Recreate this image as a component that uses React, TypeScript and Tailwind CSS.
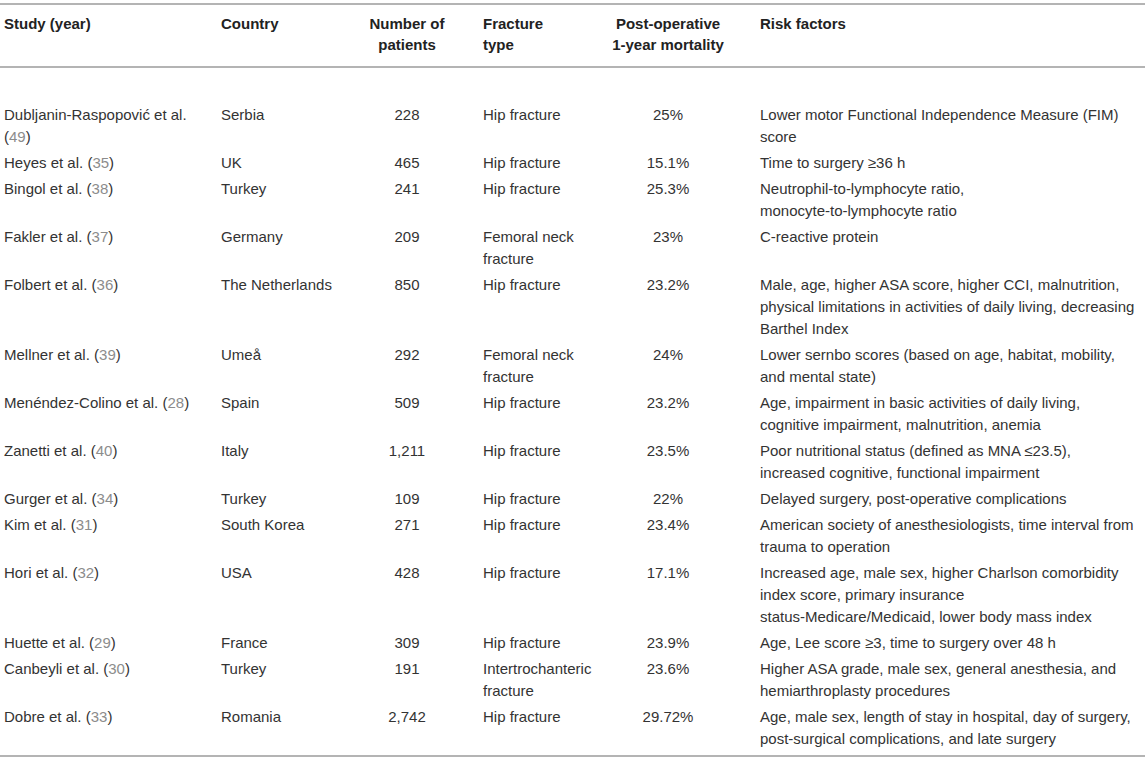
import React from 'react'

type Row = {
    study: string[]
    ref: string
    country: string
    patients: string
    fracture: string[]
    mortality: string
    risk: string[]
}

const rows: Row[] = [
    { study: ['Dubljanin-Raspopović et al.', ''], ref: '49', country: 'Serbia', patients: '228', fracture: ['Hip fracture'], mortality: '25%', risk: ['Lower motor Functional Independence Measure (FIM)', 'score'] },
    { study: ['Heyes et al.'], ref: '35', country: 'UK', patients: '465', fracture: ['Hip fracture'], mortality: '15.1%', risk: ['Time to surgery ≥36 h'] },
    { study: ['Bingol et al.'], ref: '38', country: 'Turkey', patients: '241', fracture: ['Hip fracture'], mortality: '25.3%', risk: ['Neutrophil-to-lymphocyte ratio,', 'monocyte-to-lymphocyte ratio'] },
    { study: ['Fakler et al.'], ref: '37', country: 'Germany', patients: '209', fracture: ['Femoral neck', 'fracture'], mortality: '23%', risk: ['C-reactive protein'] },
    { study: ['Folbert et al.'], ref: '36', country: 'The Netherlands', patients: '850', fracture: ['Hip fracture'], mortality: '23.2%', risk: ['Male, age, higher ASA score, higher CCI, malnutrition,', 'physical limitations in activities of daily living, decreasing', 'Barthel Index'] },
    { study: ['Mellner et al.'], ref: '39', country: 'Umeå', patients: '292', fracture: ['Femoral neck', 'fracture'], mortality: '24%', risk: ['Lower sernbo scores (based on age, habitat, mobility,', 'and mental state)'] },
    { study: ['Menéndez-Colino et al.'], ref: '28', country: 'Spain', patients: '509', fracture: ['Hip fracture'], mortality: '23.2%', risk: ['Age, impairment in basic activities of daily living,', 'cognitive impairment, malnutrition, anemia'] },
    { study: ['Zanetti et al.'], ref: '40', country: 'Italy', patients: '1,211', fracture: ['Hip fracture'], mortality: '23.5%', risk: ['Poor nutritional status (defined as MNA ≤23.5),', 'increased cognitive, functional impairment'] },
    { study: ['Gurger et al.'], ref: '34', country: 'Turkey', patients: '109', fracture: ['Hip fracture'], mortality: '22%', risk: ['Delayed surgery, post-operative complications'] },
    { study: ['Kim et al.'], ref: '31', country: 'South Korea', patients: '271', fracture: ['Hip fracture'], mortality: '23.4%', risk: ['American society of anesthesiologists, time interval from', 'trauma to operation'] },
    { study: ['Hori et al.'], ref: '32', country: 'USA', patients: '428', fracture: ['Hip fracture'], mortality: '17.1%', risk: ['Increased age, male sex, higher Charlson comorbidity', 'index score, primary insurance', 'status-Medicare/Medicaid, lower body mass index'] },
    { study: ['Huette et al.'], ref: '29', country: 'France', patients: '309', fracture: ['Hip fracture'], mortality: '23.9%', risk: ['Age, Lee score ≥3, time to surgery over 48 h'] },
    { study: ['Canbeyli et al.'], ref: '30', country: 'Turkey', patients: '191', fracture: ['Intertrochanteric', 'fracture'], mortality: '23.6%', risk: ['Higher ASA grade, male sex, general anesthesia, and', 'hemiarthroplasty procedures'] },
    { study: ['Dobre et al.'], ref: '33', country: 'Romania', patients: '2,742', fracture: ['Hip fracture'], mortality: '29.72%', risk: ['Age, male sex, length of stay in hospital, day of surgery,', 'post-surgical complications, and late surgery'] },
]

function Lines({ lines }: { lines: string[] }) {
    return (
        <>
            {lines.map((l, i) => (
                <div key={i}>{l}</div>
            ))}
        </>
    )
}

function Study({ row }: { row: Row }) {
    const ref = <>(<span className="text-[#8c8c8c]">{row.ref}</span>)</>
    if (row.study.length > 1) {
        return (
            <>
                <div>{row.study[0]}</div>
                <div>{ref}</div>
            </>
        )
    }
    return <div>{row.study[0]} {ref}</div>
}

export default function App() {
    return (
        <div className="w-[1145px] h-[762px] bg-white pt-[3px] font-['Liberation_Sans',Arial,sans-serif] text-[15px] text-[#333]">
            <table className="w-full table-fixed border-collapse border-t-2 border-b-2 border-[#b4b4b4] whitespace-nowrap">
                <colgroup>
                    <col className="w-[217px]" />
                    <col className="w-[118px]" />
                    <col className="w-[144px]" />
                    <col className="w-[121px]" />
                    <col className="w-[156px]" />
                    <col />
                </colgroup>
                <thead>
                    <tr className="border-b-2 border-[#b4b4b4] align-top text-[#222] leading-[21px]">
                        <th className="pl-[4px] pt-[8px] pb-[11px] text-left font-bold">Study (year)</th>
                        <th className="pl-[4px] pt-[8px] pb-[11px] text-left font-bold">Country</th>
                        <th className="px-[4px] pt-[8px] pb-[11px] text-center font-bold">Number of<br />patients</th>
                        <th className="pl-[4px] pt-[8px] pb-[11px] text-left font-bold">Fracture<br />type</th>
                        <th className="pl-[4px] pr-[24px] pt-[8px] pb-[11px] text-center font-bold">Post-operative<br />1-year mortality</th>
                        <th className="pl-[4px] pr-[4px] pt-[8px] pb-[11px] text-left font-bold">Risk factors</th>
                    </tr>
                </thead>
                <tbody className="leading-[22px]">
                    <tr>
                        <td colSpan={6} className="h-[35px] p-0" />
                    </tr>
                    {rows.map((r) => (
                        <tr key={r.study[0]} className="align-top">
                            <td className="pl-[4px] pr-[4px] py-[2px]">
                                <Study row={r} />
                            </td>
                            <td className="pl-[4px] py-[2px]">{r.country}</td>
                            <td className="px-[4px] py-[2px] text-center">{r.patients}</td>
                            <td className="pl-[4px] py-[2px]">
                                <Lines lines={r.fracture} />
                            </td>
                            <td className="pl-[4px] pr-[24px] py-[2px] text-center">{r.mortality}</td>
                            <td className="pl-[4px] pr-[4px] py-[2px]">
                                <Lines lines={r.risk} />
                            </td>
                        </tr>
                    ))}
                    <tr>
                        <td colSpan={6} className="h-[4px] p-0" />
                    </tr>
                </tbody>
            </table>
        </div>
    )
}
